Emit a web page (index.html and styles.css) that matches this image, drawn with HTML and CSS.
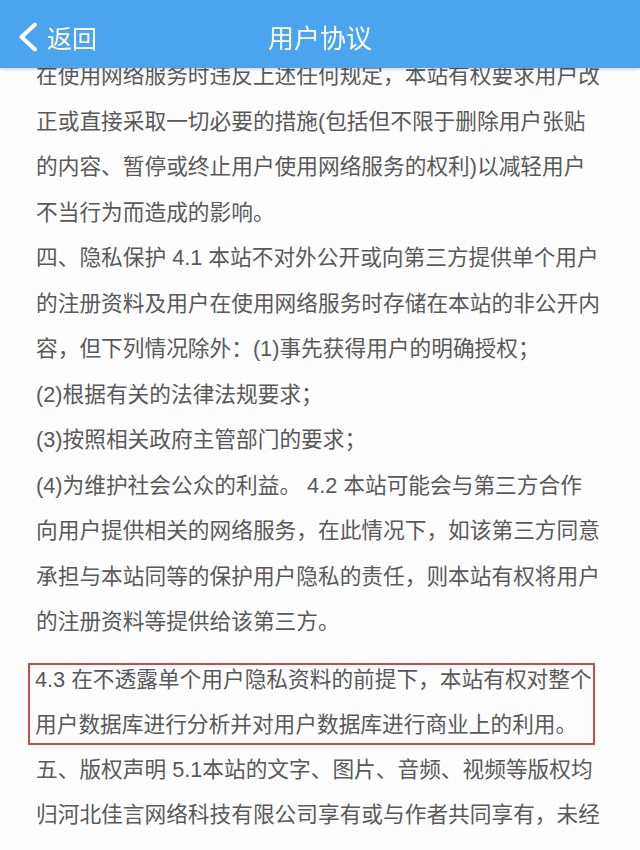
FILE: index.html
```html
<!DOCTYPE html>
<html lang="zh-CN">
<head>
<meta charset="utf-8">
<title>用户协议</title>
<link rel="stylesheet" href="styles.css">
</head>
<body>
<header class="topbar">
  <div class="back">
    <svg class="chev" width="20" height="30" viewBox="0 0 20 30" aria-hidden="true"><path d="M17 2.5 L3.5 15 L17 27.5" fill="none" stroke="#fff" stroke-width="4" stroke-linecap="round" stroke-linejoin="round"/></svg>
    <span class="back-text">返回</span>
  </div>
  <h1 class="title">用户协议</h1>
  <div class="spacer"></div>
</header>
<main class="doc">
  <p class="para">在使用网络服务时违反上述任何规定，本站有权要求用户改<br>正或直接采取一切必要的措施(包括但不限于删除用户张贴<br>的内容、暂停或终止用户使用网络服务的权利)以减轻用户<br>不当行为而造成的影响。</p>
  <p class="para">四、隐私保护 4.1 本站不对外公开或向第三方提供单个用户<br>的注册资料及用户在使用网络服务时存储在本站的非公开内<br>容，但下列情况除外：(1)事先获得用户的明确授权；</p>
  <p class="para">(2)根据有关的法律法规要求；</p>
  <p class="para">(3)按照相关政府主管部门的要求；</p>
  <p class="para">(4)为维护社会公众的利益。 4.2 本站可能会与第三方合作<br>向用户提供相关的网络服务，在此情况下，如该第三方同意<br>承担与本站同等的保护用户隐私的责任，则本站有权将用户<br>的注册资料等提供给该第三方。</p>
  <div class="highlight">
    <p class="para boxed">4.3 在不透露单个用户隐私资料的前提下，本站有权对整个<br>用户数据库进行分析并对用户数据库进行商业上的利用。</p>
  </div>
  <p class="para">五、版权声明 5.1本站的文字、图片、音频、视频等版权均<br>归河北佳言网络科技有限公司享有或与作者共同享有，未经</p>
</main>
</body>
</html>
```
FILE: styles.css
```css
html, body {
  margin: 0;
  padding: 0;
  background: #fdfdfd;
  height: 850px;
  overflow: hidden;
}
body {
  font-family: "Liberation Sans", "Noto Sans CJK SC", sans-serif;
  color: #595959;
}
.topbar {
  position: fixed;
  top: 0;
  left: 0;
  right: 0;
  height: 68px;
  box-sizing: border-box;
  padding-top: 5px;
  background: #4ba4ee;
  box-shadow: 0 1px 4px rgba(0, 0, 0, 0.2);
  display: grid;
  grid-template-columns: 1fr auto 1fr;
  align-items: center;
  color: #fff;
  z-index: 2;
}
.back {
  display: flex;
  align-items: center;
  padding-left: 18px;
}
.chev {
  display: block;
}
.back-text {
  font-family: "Noto Sans CJK SC", sans-serif;
  font-size: 25px;
  line-height: 30px;
  margin-left: 9px;
}
.title {
  margin: 0;
  font-family: "Noto Sans CJK SC", sans-serif;
  font-size: 26px;
  font-weight: 400;
  line-height: 30px;
}
.doc {
  padding: 53px 0 0 28px;
}
.para {
  margin: 0;
  padding-left: 8px;
  font-size: 21.7px;
  line-height: 45.5px;
  white-space: nowrap;
}
.highlight {
  margin: 18px 0 2px;
  width: 567px;
  box-sizing: border-box;
  border: 2px solid #c94a4c;
  padding-left: 5px;
}
.para.boxed {
  padding-left: 0;
  margin: -7.75px 0 -5.25px;
}
```
